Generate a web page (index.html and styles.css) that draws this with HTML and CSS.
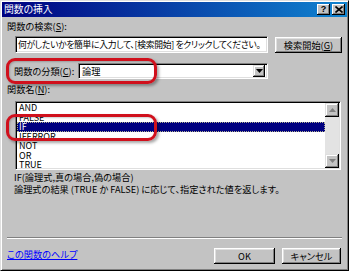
FILE: index.html
```html
<!DOCTYPE html>
<html lang="ja">
<head>
<meta charset="utf-8">
<title>関数の挿入</title>
<link rel="stylesheet" href="styles.css">
</head>
<body>
<div class="window">
  <div class="titlebar">
    <span class="title">関数の挿入</span>
    <div class="tbtns">
      <span class="tbtn help">?</span>
      <span class="tbtn close"><svg width="8" height="7" viewBox="0 0 8 7"><path d="M0.5 0.5 L7.5 6.5 M7.5 0.5 L0.5 6.5" stroke="#000" stroke-width="1.6" fill="none"/></svg></span>
    </div>
  </div>
  <div class="content">
    <div class="label">関数の検索(<u>S</u>):</div>
    <div class="search-row">
      <div class="textbox">何がしたいかを簡単に入力して、[検索開始] をクリックしてください。</div>
      <div class="btn search-btn">検索開始(<u>G</u>)</div>
    </div>
    <div class="cat-row">
      <span class="label cat-label">関数の分類(<u>C</u>):</span>
      <div class="combo">
        <span class="combo-text">論理</span>
        <span class="drop"><svg width="7" height="4" viewBox="0 0 7 4"><path d="M0 0 H7 L3.5 4 Z" fill="#000"/></svg></span>
      </div>
    </div>
    <div class="label names-label">関数名(<u>N</u>):</div>
    <div class="listbox">
      <ul class="items">
        <li>AND</li>
        <li>FALSE</li>
        <li class="selected">IF</li>
        <li>IFERROR</li>
        <li>NOT</li>
        <li>OR</li>
        <li>TRUE</li>
      </ul>
      <div class="scrollbar">
        <span class="sbtn"><svg width="7" height="4" viewBox="0 0 7 4"><path d="M3.5 0 L7 4 H0 Z" fill="#808080"/></svg></span>
        <span class="track"></span>
        <span class="sbtn"><svg width="7" height="4" viewBox="0 0 7 4"><path d="M0 0 H7 L3.5 4 Z" fill="#808080"/></svg></span>
      </div>
    </div>
    <div class="desc">
      <div>IF(論理式,真の場合,偽の場合)</div>
      <div>論理式の結果 (TRUE か FALSE) に応じて、指定された値を返します。</div>
    </div>
    <div class="sep"></div>
    <div class="footer">
      <a class="help-link" href="#">この関数のヘルプ</a>
      <div class="btns">
        <div class="btn ok-btn">OK</div>
        <div class="btn cancel-btn">キャンセル</div>
      </div>
    </div>
  </div>
  <div class="mark mark-cat"></div>
  <div class="mark mark-if"></div>
</div>
</body>
</html>
```

FILE: styles.css
```css
* { box-sizing: border-box; margin: 0; padding: 0; }
html, body { width: 349px; height: 271px; overflow: hidden; }
body {
  background: #c3c3c3;
  font-family: "Noto Sans CJK JP", "Liberation Sans", sans-serif;
  font-size: 9.2px;
  color: #000;
  font-feature-settings: "palt";
}
.window {
  position: relative;
  width: 349px;
  height: 271px;
  background: #c3c3c3;
  border: 1px solid;
  border-color: #dfdfdf #000 #000 #dfdfdf;
  box-shadow: inset 1px 1px #fff, inset -1px -1px #808080;
  padding: 1px;
  display: flex;
  flex-direction: column;
}
.titlebar {
  height: 15px;
  background: linear-gradient(to right, #000080, #1084d0);
  display: flex;
  align-items: center;
  justify-content: space-between;
  padding: 0 2px 0 2px;
}
.title { color: #fff; font-size: 9.8px; line-height: 15px; }
.tbtns { display: flex; gap: 2px; }
.tbtn {
  width: 13px; height: 11px;
  background: #c3c3c3;
  box-shadow: inset -1px -1px #000, inset 1px 1px #fff, inset -2px -2px #808080;
  display: flex; align-items: center; justify-content: center;
  font-family: "Liberation Sans", sans-serif;
  font-weight: bold; font-size: 9px; line-height: 11px;
}
.content { padding: 3px 5px 0 5px; display: flex; flex-direction: column; }
.label { line-height: 12px; height: 12px; white-space: nowrap; }
u { text-decoration: underline; text-underline-offset: 1px; }
.search-row { display: flex; gap: 7px; margin: 4px 0 0 8px; }
.textbox {
  width: 253px; height: 17px;
  background: #fff;
  border: 1px solid; border-color: #808080 #fff #fff #808080;
  box-shadow: inset 1px 1px #000, inset -1px -1px #dfdfdf;
  padding: 0 0 0 2px;
  line-height: 15px;
  font-size: 8.8px;
  letter-spacing: -0.3px;
  white-space: nowrap; overflow: hidden;
}
.btn {
  background: #c3c3c3;
  box-shadow: inset -1px -1px #000, inset 1px 1px #fff, inset -2px -2px #808080, inset 2px 2px #dfdfdf;
  height: 16px;
  display: flex; align-items: center; justify-content: center;
  white-space: nowrap;
}
.search-btn { width: 67px; margin-top: 1px; }
.cat-row { display: flex; align-items: center; margin: 10px 0 0 7px; }
.cat-label { width: 64px; }
.combo {
  width: 190px; height: 16px;
  background: #fff;
  border: 1px solid; border-color: #808080 #fff #fff #808080;
  box-shadow: inset 1px 1px #000, inset -1px -1px #dfdfdf;
  display: flex; align-items: center; justify-content: space-between;
  padding: 2px;
}
.combo-text { line-height: 12px; padding-left: 1px; }
.drop {
  width: 12px; height: 12px;
  background: #c3c3c3;
  box-shadow: inset -1px -1px #000, inset 1px 1px #dfdfdf, inset -2px -2px #808080, inset 2px 2px #fff;
  display: flex; align-items: center; justify-content: center;
}
.names-label { margin-top: 4px; }
.listbox {
  margin: 6px 0 0 8px;
  width: 326px; height: 69px;
  background: #fff;
  border: 1px solid; border-color: #808080 #fff #fff #808080;
  box-shadow: inset 1px 1px #000, inset -1px -1px #dfdfdf;
  padding: 1px;
  display: flex;
}
.items {
  list-style: none;
  flex: 1;
  overflow: hidden;
  font-size: 9px;
}
.items li { height: 9.5px; line-height: 9.5px; padding-left: 2px; }
.items li.selected {
  background: #000080; color: #fff;
  outline: 1px dotted #b0b090; outline-offset: -1px;
}
.scrollbar { width: 14px; display: flex; flex-direction: column; }
.sbtn {
  height: 14px;
  background: #c3c3c3;
  box-shadow: inset -1px -1px #000, inset 1px 1px #dfdfdf, inset -2px -2px #808080, inset 2px 2px #fff;
  display: flex; align-items: center; justify-content: center;
}
.track { flex: 1; background: #e3e3e3; }
.desc { margin: 1px 0 0 7px; }
.desc div { line-height: 12px; white-space: nowrap; }
.sep { margin-top: 42px; height: 2px; border-top: 1px solid #808080; border-bottom: 1px solid #fff; }
.footer { margin-top: 9px; display: flex; justify-content: space-between; align-items: flex-start; }
.help-link { color: #0000ff; text-decoration: underline; line-height: 12px; }
.btns { display: flex; gap: 7px; margin-right: 1px; }
.ok-btn { width: 61px; }
.cancel-btn { width: 59px; }
.mark {
  position: absolute;
  border: 3px solid #d0101c;
  border-radius: 9px;
  box-shadow: 2px 2px 3px rgba(0,0,0,0.35), inset 1px 1px 2px rgba(0,0,0,0.2);
}
.mark-cat { left: 5px; top: 57px; width: 151px; height: 26px; }
.mark-if { left: 5px; top: 113px; width: 151px; height: 27px; }
```
